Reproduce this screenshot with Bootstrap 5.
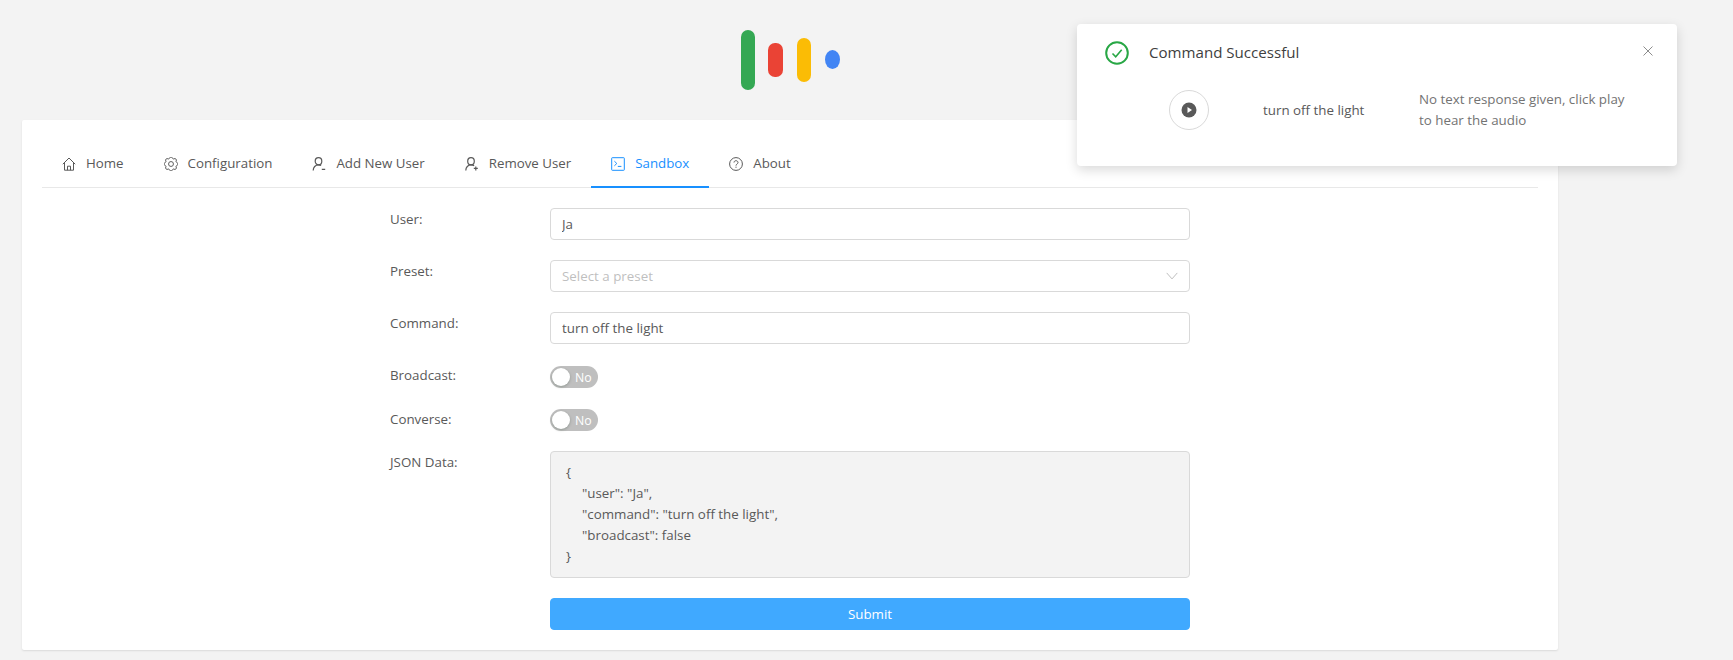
<!DOCTYPE html>
<html lang="en">
<head>
  <meta charset="UTF-8">
  <title>Sandbox</title>
  <link href="https://cdn.jsdelivr.net/npm/bootstrap@5.3.3/dist/css/bootstrap.min.css" rel="stylesheet">
  <style>
    body {
      background: #f3f3f3;
      font-family: "Open Sans", "Liberation Sans", sans-serif;
      font-size: 13.35px;
      color: #595959;
      height: 660px;
      overflow: hidden;
    }
    .logo-area { height: 120px; padding-top: 30px; padding-left: 741px; gap: 14px; }
    .bar { width: 14px; border-radius: 7px; }
    .bar-green { height: 60px; background: #34a853; margin-right: -1px; }
    .bar-red { height: 34px; width: 15px; background: #ea4335; margin-top: 13px; }
    .bar-yellow { height: 44px; background: #fbbc05; margin-top: 8px; }
    .bar-blue { height: 19px; width: 15px; border-radius: 50%; background: #4285f4; margin-top: 20px; }

    .main-panel {
      margin-left: 22px;
      width: 1536px;
      height: 530px;
      border: 0;
      border-radius: 2px;
      padding: 20px;
      box-shadow: 0 1px 2px rgba(0, 0, 0, .1);
    }
    .tab-bar { border-bottom: 1px solid #e8e8e8; height: 48px; flex-wrap: nowrap; }
    .tab-bar .nav-link {
      color: #595959;
      font-size: 13.3px;
      padding: 1px 20px 0;
      height: 48px;
      gap: 10px;
      border-radius: 0;
      border-bottom: 2px solid transparent;
    }
    .tab-bar .nav-link.active {
      color: #1890ff;
      border-bottom-color: #1890ff;
    }
    .tab-icon { width: 14px; height: 14px; flex: none; }

    .form-wrap { width: 800px; margin: 20px auto 0; }
    .form-line { margin-bottom: 20px; }
    .line-label { width: 160px; flex: none; line-height: 22px; }
    .line-field { width: 640px; flex: none; }
    .form-control.field, .form-select.field {
      height: 32px;
      font-size: 13.35px;
      color: #595959;
      border-color: #d9d9d9;
      border-radius: 4px;
      padding: 4px 11px;
    }
    .form-select.field {
      color: #bfbfbf;
      background-image: url("data:image/svg+xml,%3csvg xmlns='http://www.w3.org/2000/svg' viewBox='0 0 12 8'%3e%3cpath fill='none' stroke='%23bfbfbf' d='m.7.9 5.3 6 5.3-6'/%3e%3c/svg%3e");
      background-size: 12px 8px;
      background-position: right 11px center;
    }
    .switch-first { margin-top: 22px; margin-bottom: 21px; }
    .switch-line { height: 22px; }
    .switch-line .line-label { line-height: 19px; }
    .switch-line .label-low { line-height: 21px; }
    .switch {
      width: 48px;
      height: 22px;
      border-radius: 11px;
      background: #bfbfbf;
      color: #fff;
      font-size: 12.3px;
      padding-left: 25px;
      line-height: 23px;
      position: relative;
    }
    .switch-knob {
      position: absolute;
      left: 2px;
      top: 2px;
      width: 18px;
      height: 18px;
      border-radius: 50%;
      background: #fff;
      box-shadow: 0 1px 3px rgba(0, 35, 11, .25);
    }
    .json-box {
      height: 127px;
      background: #f3f3f3;
      border: 1px solid #d9d9d9;
      border-radius: 4px;
      padding: 10px 15px;
      line-height: 21px;
    }
    .json-indent { padding-left: 16px; }
    .submit-btn {
      height: 32px;
      font-size: 13.35px;
      background: #40a9ff;
      border-color: #40a9ff;
      border-radius: 4px;
      padding: 0;
    }

    .notice {
      position: absolute;
      left: 1077px;
      top: 24px;
      width: 600px;
      height: 142px;
      border: 0;
      border-radius: 4px;
      background: #fff;
      box-shadow: 0 4px 12px rgba(0, 0, 0, .15);
      font-size: 13.35px;
    }
    .notice-head { height: 65px; padding: 17px 0 0 28px; }
    .notice-title { font-size: 15.1px; color: #404040; margin-left: 20px; line-height: 23px; }
    .notice-close { position: absolute; left: 566px; top: 22px; width: 10px; height: 10px; }
    .notice-body { padding-left: 92px; }
    .play-btn {
      width: 40px;
      height: 40px;
      border: 1px solid #d9d9d9;
      border-radius: 50%;
      flex: none;
    }
    .notice-cmd { margin-left: 54px; width: 156px; flex: none; }
    .notice-text { width: 210px; line-height: 21px; color: #737373; }
  </style>
</head>
<body>
  <div class="logo-area d-flex align-items-start">
    <div class="bar bar-green"></div>
    <div class="bar bar-red"></div>
    <div class="bar bar-yellow"></div>
    <div class="bar bar-blue"></div>
  </div>

  <div class="card main-panel">
    <ul class="nav tab-bar">
      <li class="nav-item">
        <a class="nav-link d-flex align-items-center" href="#">
          <svg class="tab-icon" viewBox="0 0 14 14" fill="none" stroke="currentColor"><path d="M.8 7.2 7 1l6.2 6.2M2.5 5.8v7.4h9V5.8M5.5 13.2V9.2h3v4"/></svg>
          Home
        </a>
      </li>
      <li class="nav-item">
        <a class="nav-link d-flex align-items-center" href="#">
          <svg class="tab-icon" viewBox="0 0 16 16" fill="none" stroke="currentColor" stroke-width="1.1"><circle cx="8" cy="8" r="2.8"/><path d="M9.796 1.343c-.527-1.79-3.065-1.79-3.592 0l-.094.319a.873.873 0 0 1-1.255.52l-.292-.16c-1.64-.892-3.433.902-2.54 2.541l.159.292a.873.873 0 0 1-.52 1.255l-.319.094c-1.79.527-1.79 3.065 0 3.592l.319.094a.873.873 0 0 1 .52 1.255l-.16.292c-.892 1.64.901 3.434 2.541 2.54l.292-.159a.873.873 0 0 1 1.255.52l.094.319c.527 1.79 3.065 1.79 3.592 0l.094-.319a.873.873 0 0 1 1.255-.52l.292.16c1.64.893 3.434-.902 2.54-2.541l-.159-.292a.873.873 0 0 1 .52-1.255l.319-.094c1.79-.527 1.79-3.065 0-3.592l-.319-.094a.873.873 0 0 1-.52-1.255l.16-.292c.893-1.64-.902-3.433-2.541-2.54l-.292.159a.873.873 0 0 1-1.255-.52z"/></svg>
          Configuration
        </a>
      </li>
      <li class="nav-item">
        <a class="nav-link d-flex align-items-center" href="#">
          <svg class="tab-icon" viewBox="0 0 14 14" fill="none" stroke="currentColor" stroke-width="1.2"><ellipse cx="6.5" cy="4.2" rx="3.3" ry="3.6"/><path d="M1.2 13.4c0-3 2.2-5.6 5.3-5.6 1 0 1.9.3 2.6.7M9.8 12.4h3.4"/></svg>
          Add New User
        </a>
      </li>
      <li class="nav-item">
        <a class="nav-link d-flex align-items-center" href="#">
          <svg class="tab-icon" viewBox="0 0 14 14" fill="none" stroke="currentColor" stroke-width="1.2"><ellipse cx="6" cy="4.2" rx="3.3" ry="3.6"/><path d="M.8 13.4c0-3 2.2-5.6 5.2-5.6 1.2 0 2.3.3 3.1 1M10.8 9.4v4M8.8 11.4h4"/></svg>
          Remove User
        </a>
      </li>
      <li class="nav-item">
        <a class="nav-link active d-flex align-items-center" href="#">
          <svg class="tab-icon" viewBox="0 0 14 14" fill="none" stroke="currentColor"><rect x=".7" y=".7" width="12.6" height="12.6" rx=".6"/><path d="m3.4 4.2 2.4 2.3-2.4 2.3M6.8 9.4h3.6"/></svg>
          Sandbox
        </a>
      </li>
      <li class="nav-item">
        <a class="nav-link d-flex align-items-center" href="#">
          <svg class="tab-icon" viewBox="0 0 14 14" fill="none" stroke="currentColor"><circle cx="7" cy="7" r="6.4"/><path d="M5 5.5C5 4.4 5.9 3.7 7 3.7s2 .8 2 1.8c0 1.5-2 1.6-2 3.1"/><circle cx="7" cy="10.2" r=".6" fill="currentColor" stroke="none"/></svg>
          About
        </a>
      </li>
    </ul>

    <form class="form-wrap">
      <div class="d-flex form-line">
        <label class="line-label">User:</label>
        <div class="line-field"><input class="form-control field" value="Ja"></div>
      </div>
      <div class="d-flex form-line">
        <label class="line-label">Preset:</label>
        <div class="line-field"><select class="form-select field"><option>Select a preset</option></select></div>
      </div>
      <div class="d-flex">
        <label class="line-label">Command:</label>
        <div class="line-field"><input class="form-control field" value="turn off the light"></div>
      </div>
      <div class="d-flex switch-line switch-first">
        <label class="line-label">Broadcast:</label>
        <div class="line-field"><div class="switch"><span class="switch-knob"></span>No</div></div>
      </div>
      <div class="d-flex switch-line form-line">
        <label class="line-label label-low">Converse:</label>
        <div class="line-field"><div class="switch"><span class="switch-knob"></span>No</div></div>
      </div>
      <div class="d-flex form-line">
        <label class="line-label">JSON Data:</label>
        <div class="line-field">
          <div class="json-box">
            <div>{</div>
            <div class="json-indent">"user": "Ja",</div>
            <div class="json-indent">"command": "turn off the light",</div>
            <div class="json-indent">"broadcast": false</div>
            <div>}</div>
          </div>
        </div>
      </div>
      <div class="d-flex">
        <div class="line-label"></div>
        <div class="line-field"><button type="button" class="btn btn-primary w-100 submit-btn">Submit</button></div>
      </div>
    </form>
  </div>

  <div class="toast show notice">
    <div class="notice-head d-flex align-items-start">
      <svg width="24" height="24" viewBox="0 0 24 24" fill="none" stroke="#28a745" stroke-width="2"><circle cx="12" cy="12" r="10.8"/><path stroke-width="1.6" d="m7.5 12.5 3.2 3.2 6-7"/></svg>
      <span class="notice-title">Command Successful</span>
      <svg class="notice-close" viewBox="0 0 10 10" stroke="#8c8c8c" fill="none"><path d="m.5.5 9 9M9.5.5l-9 9"/></svg>
    </div>
    <div class="notice-body d-flex align-items-center">
      <div class="play-btn d-flex align-items-center justify-content-center">
        <svg width="16" height="16" viewBox="0 0 16 16"><circle cx="8" cy="8" r="7.5" fill="#595959"/><path d="M6.5 5v6L11 8z" fill="#fff"/></svg>
      </div>
      <span class="notice-cmd">turn off the light</span>
      <span class="notice-text">No text response given, click play to hear the audio</span>
    </div>
  </div>

  <script src="https://cdn.jsdelivr.net/npm/bootstrap@5.3.3/dist/js/bootstrap.bundle.min.js"></script>
</body>
</html>
